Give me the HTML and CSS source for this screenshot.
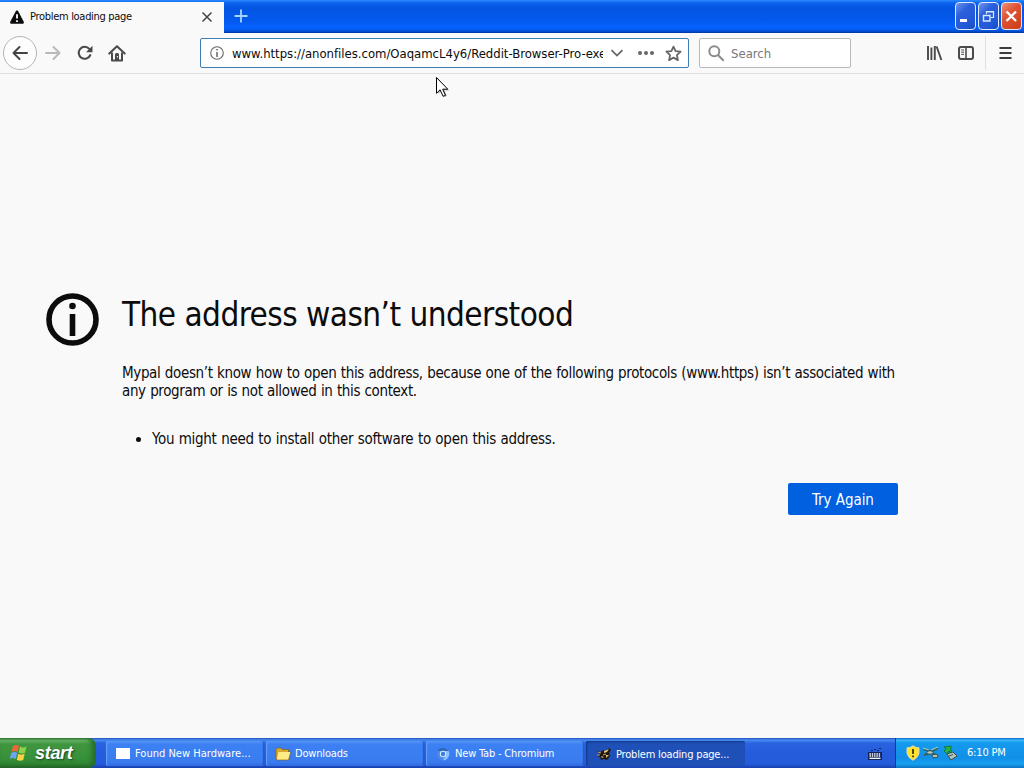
FILE: index.html
```
<!DOCTYPE html>
<html lang="en">
<head>
    <meta charset="utf-8">
    <title>Problem loading page</title>
    <link rel="stylesheet" href="styles.css">
</head>
<body>
    <div class="titlebar">
        <div class="tab">
            <svg class="tab-icon" width="14" height="14" viewBox="0 0 14 14">
                <path d="M7 0.5C7.7 0.5 8.1 1 8.5 1.7L13.6 11.5C14.2 12.8 13.8 13.8 12.4 13.8H1.6C0.2 13.8 -0.2 12.8 0.4 11.5L5.5 1.7C5.9 1 6.3 0.5 7 0.5Z" fill="#0c0c0d"/>
                <path d="M7 4.3V8.6M7 10.2V12" stroke="#fff" stroke-width="1.8"/>
            </svg>
            <span class="tab-title">Problem loading page</span>
            <svg class="tab-close" width="12" height="12" viewBox="0 0 12 12">
                <path d="M1.5 1.5L10.5 10.5M10.5 1.5L1.5 10.5" stroke="#444" stroke-width="1.5"/>
            </svg>
        </div>
        <svg class="new-tab" width="14" height="14" viewBox="0 0 14 14">
            <path d="M7 0.5V13.5M0.5 7H13.5" stroke="#a9d3ff" stroke-width="1.8"/>
        </svg>
        <div class="window-buttons">
            <div class="win-btn">
                <svg width="19" height="26" viewBox="0 0 19 26"><path d="M4 17.5H11" stroke="#fff" stroke-width="3"/></svg>
            </div>
            <div class="win-btn">
                <svg width="19" height="26" viewBox="0 0 19 26" fill="none" stroke="#d8e8ff">
                    <path d="M7.5 11V8.5H14.5V14.5H12M7 9H15" stroke-width="1.2"/>
                    <path d="M4.5 12.5H11V18H4.5ZM4 12.5H11.5" stroke-width="1.4"/>
                </svg>
            </div>
            <div class="win-btn win-close">
                <svg width="19" height="26" viewBox="0 0 19 26"><path d="M4.5 8.5L14 18M14 8.5L4.5 18" stroke="#fff" stroke-width="2.4"/></svg>
            </div>
        </div>
    </div>

    <div class="toolbar">
        <div class="back">
            <svg width="16" height="16" viewBox="0 0 16 16" fill="none" stroke="#444" stroke-width="2" stroke-linecap="round" stroke-linejoin="round">
                <path d="M15 8H1.5M7.5 2L1.5 8L7.5 14"/>
            </svg>
        </div>
        <svg class="forward" width="16" height="16" viewBox="0 0 16 16" fill="none" stroke="#b9b9ba" stroke-width="2" stroke-linecap="round" stroke-linejoin="round">
            <path d="M1 8H14.5M8.5 2L14.5 8L8.5 14"/>
        </svg>
        <svg class="reload" width="16" height="16" viewBox="0 0 16 16">
            <path d="M13.2 10.2A6 6 0 1 1 12.3 3.9" fill="none" stroke="#4a4a4b" stroke-width="2.1" stroke-linecap="round"/>
            <path d="M15.5 0.8V7.3H9Z" fill="#4a4a4b"/>
        </svg>
        <svg class="home" width="18" height="17" viewBox="0 0 18 17">
            <path d="M1.3 8.6L9 1.3L16.7 8.6" fill="none" stroke="#4a4a4b" stroke-width="2" stroke-linecap="round" stroke-linejoin="round"/>
            <path d="M4 7.5V15.4H14V7.5" fill="none" stroke="#4a4a4b" stroke-width="2" stroke-linejoin="round"/>
            <path d="M7 15V9.2Q7 8 9 8T11 9.2V15Z" fill="#4a4a4b"/>
            <path d="M9.4 11V12.5" stroke="#fff"/>
        </svg>

        <div class="urlbar">
            <svg class="info" width="14" height="14" viewBox="0 0 14 14">
                <circle cx="7" cy="7" r="6.3" fill="none" stroke="#666" stroke-width="1.1"/>
                <path d="M7 3V4.6M7 6V11" stroke="#666" stroke-width="1.5"/>
            </svg>
            <div class="url">www.https://anonfiles.com/OaqamcL4y6/Reddit-Browser-Pro-exe</div>
            <svg class="chevron" width="14" height="8" viewBox="0 0 14 8"><path d="M1.5 1.2L7 6.6L12.5 1.2" fill="none" stroke="#666" stroke-width="1.8"/></svg>
            <svg class="dots" width="18" height="6" viewBox="0 0 18 6" fill="#666">
                <circle cx="3" cy="3" r="2"/><circle cx="9" cy="3" r="2"/><circle cx="15" cy="3" r="2"/>
            </svg>
            <svg class="star" width="17" height="17" viewBox="0 0 17 17">
                <path d="M8.5 1.6L10.6 6.1L15.6 6.7L11.9 10.1L12.9 15.1L8.5 12.6L4.1 15.1L5.1 10.1L1.4 6.7L6.4 6.1Z" fill="none" stroke="#666" stroke-width="1.8" stroke-linejoin="round"/>
            </svg>
        </div>

        <div class="search">
            <svg width="17" height="17" viewBox="0 0 17 17" fill="none" stroke="#8b8b8c" stroke-width="2">
                <circle cx="6.3" cy="6.3" r="5"/><path d="M10 10L15.7 15.7"/>
            </svg>
            <span>Search</span>
        </div>

        <div class="tools">
            <svg width="17" height="16" viewBox="0 0 17 16" stroke="#4a4a4b" stroke-width="1.9">
                <path d="M2 1V15M5.4 2.5V15M8.8 1V15M10.6 1.5L15.4 15"/>
            </svg>
            <svg width="16" height="14" viewBox="0 0 16 14" fill="none" stroke="#4a4a4b">
                <rect x="1" y="1" width="14" height="12" rx="2" stroke-width="2"/>
                <path d="M8 1V13" stroke-width="1.6"/>
                <path d="M3.2 4H6M3.2 6.2H6M3.2 8.4H6"/>
            </svg>
        </div>
        <div class="menu">
            <svg width="13" height="12" viewBox="0 0 13 12" stroke="#3c3c3d" stroke-width="2">
                <path d="M0.5 1H12.5M0.5 6H12.5M0.5 11H12.5"/>
            </svg>
        </div>
    </div>

    <div class="page">
        <svg class="page-icon" width="54" height="54" viewBox="0 0 54 54">
            <circle cx="27.5" cy="27.5" r="23.5" fill="none" stroke="#0c0c0d" stroke-width="5.6"/>
            <circle cx="27.5" cy="14" r="3.3" fill="#0c0c0d"/>
            <path d="M27.5 22V44" stroke="#0c0c0d" stroke-width="5.6"/>
        </svg>
        <div class="message">
            <h1>The address wasn’t understood</h1>
            <p>Mypal doesn’t know how to open this address, because one of the following protocols (www.https) isn’t associated with<br>any program or is not allowed in this context.</p>
            <ul>
                <li>You might need to install other software to open this address.</li>
            </ul>
            <button class="try-again">Try Again</button>
        </div>
    </div>

    <div class="taskbar">
        <div class="start">
            <svg width="20" height="20" viewBox="0 0 20 20">
                <path d="M4 3Q7 1 10 3L8.5 9Q5.5 7 2.5 9Z" fill="#f0653a"/>
                <path d="M11 3.5Q14 5.5 17.5 3.5L16 9.8Q13 11.5 9.6 9.6Z" fill="#8fd04a"/>
                <path d="M2.2 10Q5.2 8.2 8.2 10L6.7 16Q3.7 14 0.7 16Z" fill="#6da4f5"/>
                <path d="M9.3 10.7Q12.5 12.5 15.7 10.8L14.2 17Q11 18.7 7.8 16.8Z" fill="#fbd33c"/>
            </svg>
            <span>start</span>
        </div>
        <div class="tasks">
            <div class="task hardware">
                <svg width="16" height="16" viewBox="0 0 16 16"><rect x="1" y="2" width="14" height="11" fill="#fff"/></svg>
                <span>Found New Hardware...</span>
            </div>
            <div class="task">
                <svg width="16" height="16" viewBox="0 0 16 16">
                    <path d="M1 3.5L2 2H6L7.5 3.5H13.5V6H15.5L13.5 14H2L1 12Z" fill="#d9a92c" stroke="#6f5a18" stroke-width=".6"/>
                    <path d="M3.5 6H15.3L13.2 13.5H1.8Z" fill="#ffeb86"/>
                </svg>
                <span>Downloads</span>
            </div>
            <div class="task">
                <svg width="16" height="16" viewBox="0 0 16 16">
                    <circle cx="8" cy="8" r="6.3" fill="#4a8ae6"/>
                    <path d="M8 1.7A6.3 6.3 0 0 1 8 14.3L11 9A3.4 3.4 0 0 0 8 4.6Z" fill="#8fc0ff"/>
                    <path d="M2.5 5A6.3 6.3 0 0 1 13.6 5H8Z" fill="#2f67bd"/>
                    <circle cx="8" cy="8" r="3.2" fill="#d9ebff"/><circle cx="8" cy="8" r="2.2" fill="#3b7be2"/>
                </svg>
                <span>New Tab - Chromium</span>
            </div>
            <div class="task active">
                <svg width="16" height="16" viewBox="0 0 16 16">
                    <path d="M1 5L5 6L7 4L9 5L13 2L15 4L13 7L14 10L11 14L8 13L5 14L4 11L1 10L4 8Z" fill="#20180f"/>
                    <path d="M8 5L13 3L11 6L8 7ZM5 10L8 11L6 12ZM10 9L13 9L10 12Z" fill="#e0bd7d"/>
                    <path d="M2 6L5 7M1 9L4 9M7 9L10 8" stroke="#c7a06a"/>
                </svg>
                <span>Problem loading page...</span>
            </div>
        </div>
        <svg class="keyboard" width="14" height="14" viewBox="0 0 14 14">
            <path d="M3 3.5H5M6 2.5H8M9 3.5H11M11 1.5H13" fill="none" stroke="#10245a"/>
            <rect x="0" y="5" width="14" height="8" fill="#10245a"/>
            <path d="M1.5 7H12.5M1.5 9H12.5" stroke="#fff" stroke-width="1.3" stroke-dasharray="1.4 .9"/>
            <path d="M1.5 11.3H12.5" stroke="#fff" stroke-width="1.3"/>
        </svg>
        <div class="tray">
            <svg width="14" height="16" viewBox="0 0 14 16">
                <path d="M7 .8Q9.5 2.8 13 2.8V8Q12.5 12.5 7 15.3Q1.5 12.5 1 8V2.8Q4.5 2.8 7 .8Z" fill="#ffe12e" stroke="#d9d9b0"/>
                <path d="M7 4V9M7 10.5V12.3" stroke="#33300c" stroke-width="1.7"/>
            </svg>
            <svg width="16" height="16" viewBox="0 0 16 16">
                <path d="M0 4L8 7L15 3M1 10L8 8L15 11" fill="none" stroke="#315f61" stroke-width="2"/>
                <path d="M0 3L6 5M8 5L15 2" stroke="#9bc8b0" stroke-width="1.2"/>
                <ellipse cx="7" cy="7.5" rx="3.2" ry="1.8" fill="#b6c8b8" stroke="#2d5353"/>
                <ellipse cx="12" cy="11" rx="3" ry="1.8" fill="#b9c5b0" stroke="#2d5353"/>
            </svg>
            <svg width="16" height="16" viewBox="0 0 16 16">
                <path d="M5 9L11 7L15 11L9 15Z" fill="#b7c4bd" stroke="#35534b"/>
                <path d="M7 11L11 9.5" stroke="#39544c"/>
                <path d="M2 2L9 1V8L7 6L5 9L2 6L4 4Z" fill="#26b245" stroke="#0c6b36" stroke-width=".8"/>
            </svg>
            <span class="clock">6:10 PM</span>
        </div>
    </div>

    <svg class="cursor" width="18" height="24" viewBox="0 0 18 24">
        <path d="M3 3V18L6.5 15L9.5 21L12 20L9.5 14.5H14Z" fill="#000" opacity=".25"/>
        <path d="M1.5 1.5V17.3L5.1 13.8L8.1 20.3L10.5 19.3L7.7 13.2H12.8Z" fill="#fff" stroke="#000"/>
    </svg>
</body>
</html>
```

FILE: styles.css
```
body {
    margin: 0;
    width: 1024px;
    height: 768px;
    overflow: hidden;
    background: #f9f9fa;
    color: #0c0c0d;
    font-family: Tahoma, "DejaVu Sans Condensed", "DejaVu Sans", sans-serif;
    font-stretch: condensed;
    display: flex;
    flex-direction: column;
    position: relative;
}

svg {
    display: block;
    flex: none;
}

span,
h1,
p,
li {
    white-space: nowrap;
}

/* title bar */
.titlebar {
    height: 33px;
    flex: none;
    display: flex;
    background: linear-gradient(#2b8bff 0, #0b62ee 3px, #0355e2 8px, #0359ec 20px, #0562ff 28px, #0352d8 31px, #003399 33px);
}

.tab {
    width: 224px;
    height: 31px;
    margin-top: 2px;
    box-sizing: border-box;
    padding: 0 11px 2px 10px;
    background: #f9f9fa;
    display: flex;
    align-items: center;
}

.tab-title {
    flex: 1;
    margin-left: 6px;
    font-size: 11px;
    letter-spacing: -0.3px;
}

.new-tab {
    margin: 9px 0 0 10px;
}

.window-buttons {
    margin: 2px 2px 0 auto;
    display: flex;
    gap: 2px;
}

.win-btn {
    width: 19px;
    height: 26px;
    border: 1px solid #dfeaff;
    border-radius: 4px;
    background: linear-gradient(135deg, #7095f0, #2b5fdc 35%, #2257d6 75%, #164bc2);
}

.win-close {
    background: linear-gradient(135deg, #ef9277, #dd5334 40%, #cc3d17);
}

/* toolbar */
.toolbar {
    height: 40px;
    flex: none;
    display: flex;
    align-items: center;
    border-bottom: 1px solid #dcdee0;
}

.back {
    width: 32px;
    height: 32px;
    margin-left: 3px;
    border: 1px solid #b5b5b6;
    border-radius: 50%;
    background: #fdfdfd;
    display: flex;
    align-items: center;
    justify-content: center;
}

.forward {
    margin-left: 8px;
}

.reload {
    margin-left: 16px;
}

.home {
    margin-left: 15px;
}

.urlbar {
    width: 487px;
    height: 28px;
    margin-left: 74px;
    border: 1px solid #3f7cb5;
    border-radius: 2px;
    background: #fff;
    display: flex;
    align-items: center;
}

.info {
    margin-left: 9px;
}

.url {
    width: 371px;
    margin-left: 8px;
    overflow: hidden;
    white-space: nowrap;
    font-size: 13px;
    letter-spacing: -0.02px;
}

.chevron {
    margin-left: 7px;
}

.dots {
    margin-left: 13px;
}

.star {
    margin-left: 10px;
}

.search {
    width: 142px;
    height: 28px;
    margin-left: 10px;
    padding-left: 8px;
    border: 1px solid #b9b9bb;
    border-radius: 2px;
    background: #fff;
    color: #77777a;
    font-size: 13px;
    display: flex;
    align-items: center;
    gap: 6px;
}

.tools {
    margin-left: auto;
    display: flex;
    align-items: center;
    gap: 15px;
}

.menu {
    width: 25px;
    height: 34px;
    margin-left: 11px;
    padding-left: 13px;
    border-left: 1px solid #e1e1e3;
    display: flex;
    align-items: center;
}

/* error page */
.page {
    flex: 1;
    display: flex;
    align-items: flex-start;
    padding: 218px 126px 0 45px;
}

.message {
    flex: 1;
    min-width: 0;
    margin-left: 23px;
    display: flex;
    flex-direction: column;
    font-size: 15px;
    line-height: 18px;
}

h1 {
    margin: 1px 0 0;
    font-size: 33px;
    font-weight: 400;
    line-height: 44px;
    letter-spacing: -0.55px;
}

p {
    margin: 27px 0 0;
    letter-spacing: -0.36px;
    word-spacing: 0.5px;
}

ul {
    margin: 30px 0 0;
    padding-left: 30px;
    letter-spacing: -0.28px;
    word-spacing: 0.5px;
}

.try-again {
    align-self: flex-end;
    width: 110px;
    height: 32px;
    margin-top: 35px;
    padding: 1px 0 0;
    border: none;
    border-radius: 2px;
    background: #0060df;
    color: #fff;
    font-family: inherit;
    font-stretch: condensed;
    font-size: 15px;
    letter-spacing: -0.05px;
}

/* taskbar */
.taskbar {
    height: 30px;
    flex: none;
    display: flex;
    color: #fff;
    font-size: 11px;
    letter-spacing: -0.18px;
    background: linear-gradient(#1f4fb8 0, #4a8cf5 2px, #2a63e0 5px, #245cdc 15px, #245bdb 26px, #183fae 30px);
}

.start {
    width: 87px;
    padding-left: 9px;
    border-radius: 0 8px 8px 0;
    background: linear-gradient(#2c7a30 0, #6fb96c 2px, #40963f 6px, #37903a 20px, #2f8532 26px, #1f5f24 30px);
    box-shadow: inset -4px 0 5px #256d2a;
    display: flex;
    align-items: center;
    gap: 6px;
    font: italic bold 18px "Liberation Sans", sans-serif;
    letter-spacing: -0.3px;
    text-shadow: 1px 1px 2px #1d4220;
}

.tasks {
    margin: 3px 0 0 10px;
    display: flex;
    gap: 2px;
}

.task {
    width: 149px;
    height: 25px;
    padding-left: 9px;
    border-radius: 2px;
    background: linear-gradient(#5c9bf9 0, #3c80f3 3px, #3a7cf0 21px, #2f6be0 25px);
    box-shadow: inset -1px 0 1px #2456c0, inset 1px 0 1px #6aa2fa;
    display: flex;
    align-items: center;
    gap: 4px;
}

.task span {
    margin-top: -1px;
}

.hardware {
    letter-spacing: 0.02px;
}

.active {
    padding-left: 10px;
    background: #1e50b8;
    box-shadow: inset 1px 1px 2px #123782;
}

.active span {
    margin-top: 1px;
}

.keyboard {
    margin: 9px 13px 0 auto;
}

.tray {
    width: 118px;
    padding-left: 10px;
    border-left: 1px solid #0b3c9d;
    background: linear-gradient(#0d5fc4 0, #3cb8f8 2px, #149aee 5px, #128fe8 20px, #15a0ee 26px, #0c70c0 30px);
    display: flex;
    align-items: center;
    gap: 3px;
}

.clock {
    margin: -1px 0 0 6px;
}

.cursor {
    position: absolute;
    left: 435px;
    top: 76px;
}
```
